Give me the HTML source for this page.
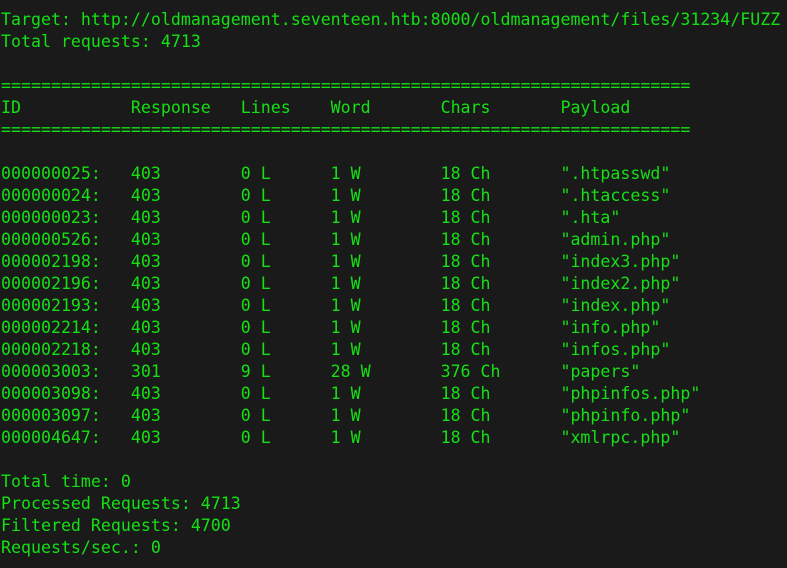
<!DOCTYPE html>
<html><head><meta charset="utf-8"><style>
html,body{margin:0;padding:0;background:#1a1a1a;width:787px;height:568px;overflow:hidden}
pre{margin:0;position:absolute;left:1px;top:9px;font-family:"DejaVu Sans Mono","Liberation Mono",monospace;font-size:16.6px;line-height:22px;color:#14e014;white-space:pre}
</style></head><body><pre>Target: http://oldmanagement.seventeen.htb:8000/oldmanagement/files/31234/FUZZ
Total requests: 4713

=====================================================================
ID           Response   Lines    Word       Chars       Payload
=====================================================================

000000025:   403        0 L      1 W        18 Ch       ".htpasswd"
000000024:   403        0 L      1 W        18 Ch       ".htaccess"
000000023:   403        0 L      1 W        18 Ch       ".hta"
000000526:   403        0 L      1 W        18 Ch       "admin.php"
000002198:   403        0 L      1 W        18 Ch       "index3.php"
000002196:   403        0 L      1 W        18 Ch       "index2.php"
000002193:   403        0 L      1 W        18 Ch       "index.php"
000002214:   403        0 L      1 W        18 Ch       "info.php"
000002218:   403        0 L      1 W        18 Ch       "infos.php"
000003003:   301        9 L      28 W       376 Ch      "papers"
000003098:   403        0 L      1 W        18 Ch       "phpinfos.php"
000003097:   403        0 L      1 W        18 Ch       "phpinfo.php"
000004647:   403        0 L      1 W        18 Ch       "xmlrpc.php"

Total time: 0
Processed Requests: 4713
Filtered Requests: 4700
Requests/sec.: 0</pre></body></html>
